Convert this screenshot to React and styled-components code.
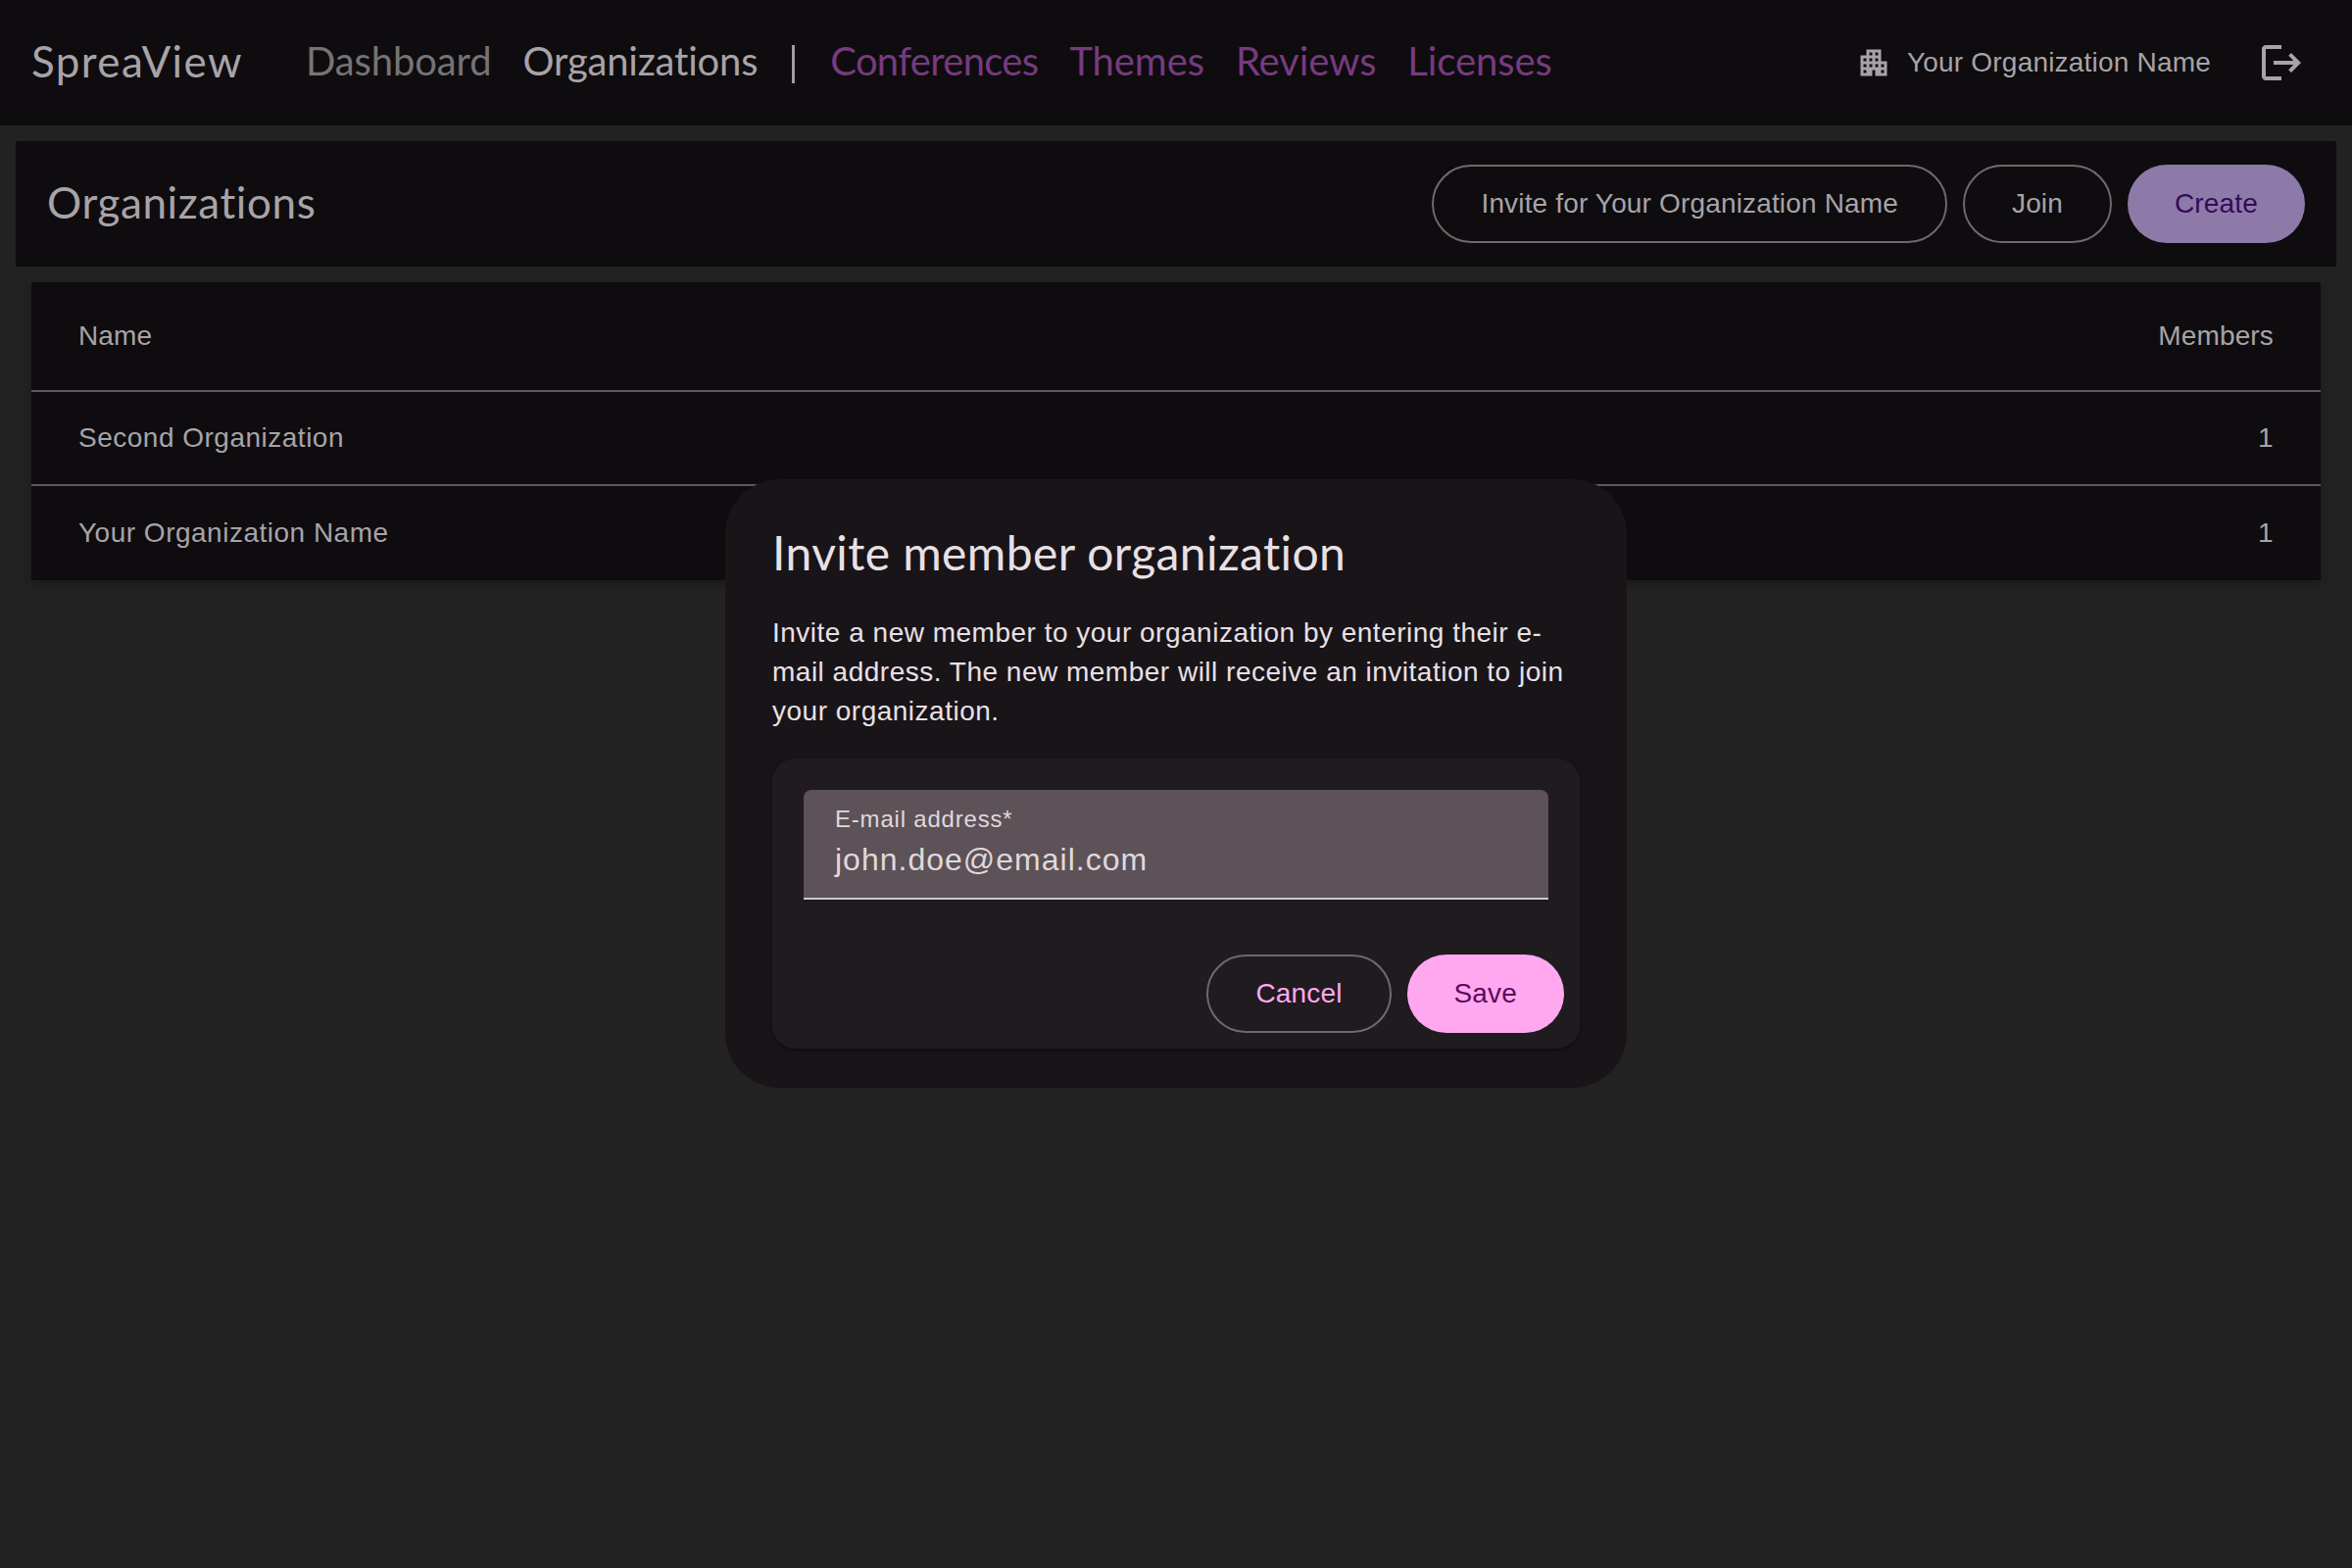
import React from 'react';
import styled, { createGlobalStyle } from 'styled-components';
import { MdApartment, MdLogout } from 'react-icons/md';

const GlobalStyle = createGlobalStyle`
  html, body {
    margin: 0;
    padding: 0;
    background: #222222;
  }
  body {
    font-family: "Liberation Sans", Arial, sans-serif;
    min-height: 1600px;
  }
`;

const heading = '"Lato", "Noto Sans", sans-serif';

const Page = styled.div`
  position: relative;
  min-height: 1600px;
  background: #222222;
`;

const Header = styled.header`
  display: flex;
  align-items: center;
  height: 128px;
  padding: 0 48px 0 32px;
  background: #0e0c0e;
  box-sizing: border-box;
`;

const Brand = styled.div`
  font-family: ${heading};
  font-variant-ligatures: none;
  font-weight: 400;
  font-size: 44px;
  line-height: 52px;
  letter-spacing: 1.4px;
  color: #a8a3a8;
  margin: 0 64px 4px 0;
`;

const Nav = styled.nav`
  display: flex;
  align-items: center;
  gap: 32px;
`;

const NavLink = styled.a`
  font-family: ${heading};
  font-variant-ligatures: none;
  font-weight: 400;
  font-size: 40px;
  line-height: 48px;
  letter-spacing: ${(p) => p.$spacing || '-0.1px'};
  margin-bottom: 4px;
  color: ${(p) =>
    p.$disabled ? '#773a80' : p.$active ? '#a8a3a8' : '#757375'};
`;

const Divider = styled.span`
  width: 3px;
  height: 39px;
  margin: 3px 4px 0 3px;
  background: #a09ca0;
`;

const HeaderRight = styled.div`
  margin-left: auto;
  display: flex;
  align-items: center;
  color: #a8a3a8;
  font-size: 28px;
  letter-spacing: 0.2px;
`;

const OrgIcon = styled(MdApartment)`
  width: 36px;
  height: 36px;
  margin-right: 16px;
`;

const LogoutIcon = styled(MdLogout)`
  width: 48px;
  height: 48px;
  margin-left: 48px;
`;

const Toolbar = styled.div`
  display: flex;
  align-items: center;
  justify-content: space-between;
  height: 128px;
  margin: 16px 16px 0;
  padding: 0 32px;
  background: #0e0c0e;
  box-sizing: border-box;
`;

const Title = styled.h1`
  margin: 0 0 4px;
  font-family: ${heading};
  font-variant-ligatures: none;
  font-weight: 400;
  font-size: 44px;
  line-height: 52px;
  letter-spacing: 0.6px;
  color: #a8a3a8;
`;

const Actions = styled.div`
  display: flex;
  gap: 16px;
`;

const Pill = styled.button`
  height: 80px;
  padding: 0 48px;
  border-radius: 40px;
  border: ${(p) => (p.$filled ? 'none' : '2px solid #6e696d')};
  background: ${(p) => (p.$filled ? p.$fill : 'transparent')};
  color: ${(p) => p.$color};
  font-family: "Liberation Sans", Arial, sans-serif;
  font-size: 28px;
  letter-spacing: 0.16px;
  box-sizing: border-box;
`;

const Table = styled.div`
  margin: 16px 32px 0;
  background: #0e0c0e;
  box-shadow: 0 4px 10px rgba(0, 0, 0, 0.25);
`;

const Row = styled.div`
  display: flex;
  justify-content: space-between;
  align-items: center;
  height: ${(p) => (p.$head ? '112px' : '96px')};
  padding: 0 48px;
  color: #a8a3a8;
  font-size: 28px;
  letter-spacing: ${(p) => (p.$head ? '0.15px' : '0.5px')};
  box-sizing: border-box;
  border-bottom: ${(p) => (p.$last ? 'none' : '2px solid #5c5a5c')};
`;

const Dialog = styled.div`
  position: absolute;
  left: 740px;
  top: 489px;
  width: 920px;
  height: 621px;
  padding: 48px;
  box-sizing: border-box;
  background: #181418;
  border-radius: 56px;
`;

const DialogTitle = styled.h2`
  margin: 0;
  font-family: ${heading};
  font-variant-ligatures: none;
  font-weight: 400;
  font-size: 48px;
  line-height: 54px;
  letter-spacing: 0.4px;
  color: #e9e0e6;
`;

const DialogText = styled.p`
  margin: 35px 0 0;
  font-size: 28px;
  line-height: 40px;
  letter-spacing: 0.5px;
  color: #e9e0e6;
`;

const FormCard = styled.div`
  margin-top: 28px;
  padding: 32px 16px 16px 32px;
  background: #1f1b1f;
  border-radius: 24px;
  box-shadow: 0 2px 4px rgba(0, 0, 0, 0.3);
`;

const Field = styled.div`
  margin-right: 16px;
  height: 112px;
  padding: 14px 32px 0;
  background: #5c5257;
  border-radius: 8px 8px 0 0;
  border-bottom: 2px solid #cfc6cc;
  box-sizing: border-box;
`;

const FieldLabel = styled.label`
  display: block;
  font-size: 24px;
  line-height: 32px;
  letter-spacing: 0.8px;
  color: #e0d8dd;
`;

const FieldValue = styled.div`
  font-size: 32px;
  line-height: 50px;
  letter-spacing: 1px;
  color: #e0d8dd;
`;

const FormActions = styled.div`
  display: flex;
  justify-content: flex-end;
  gap: 16px;
  margin-top: 56px;
`;

const App = () => (
  <Page>
    <GlobalStyle />
    <Header>
      <Brand>SpreaView</Brand>
      <Nav>
        <NavLink>Dashboard</NavLink>
        <NavLink $active $spacing="-0.2px">Organizations</NavLink>
        <Divider />
        <NavLink $disabled $spacing="-0.7px">Conferences</NavLink>
        <NavLink $disabled>Themes</NavLink>
        <NavLink $disabled>Reviews</NavLink>
        <NavLink $disabled>Licenses</NavLink>
      </Nav>
      <HeaderRight>
        <OrgIcon />
        Your Organization Name
        <LogoutIcon />
      </HeaderRight>
    </Header>
    <Toolbar>
      <Title>Organizations</Title>
      <Actions>
        <Pill $color="#a8a3a8">Invite for Your Organization Name</Pill>
        <Pill $color="#a8a3a8">Join</Pill>
        <Pill $filled $fill="#8e7aa8" $color="#330a5c">Create</Pill>
      </Actions>
    </Toolbar>
    <Table>
      <Row $head><span>Name</span><span>Members</span></Row>
      <Row><span>Second Organization</span><span>1</span></Row>
      <Row $last><span>Your Organization Name</span><span>1</span></Row>
    </Table>
    <Dialog>
      <DialogTitle>Invite member organization</DialogTitle>
      <DialogText>
        Invite a new member to your organization by entering their e-mail
        address. The new member will receive an invitation to join your
        organization.
      </DialogText>
      <FormCard>
        <Field>
          <FieldLabel>E-mail address*</FieldLabel>
          <FieldValue>john.doe@email.com</FieldValue>
        </Field>
        <FormActions>
          <Pill $color="#ffa8f0">Cancel</Pill>
          <Pill $filled $fill="#ffa8f0" $color="#5c0a5c">Save</Pill>
        </FormActions>
      </FormCard>
    </Dialog>
  </Page>
);

export default App;
